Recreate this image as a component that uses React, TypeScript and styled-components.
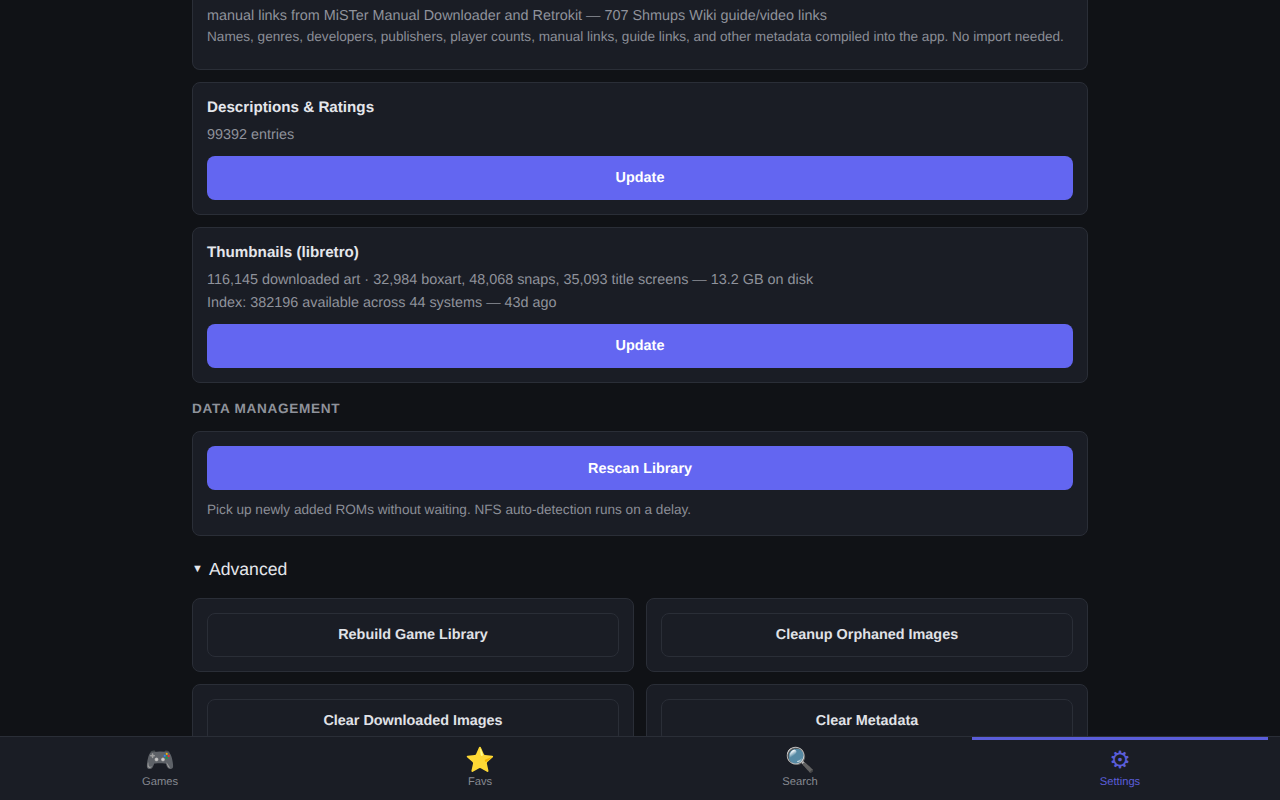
import React from 'react'
import styled, { createGlobalStyle } from 'styled-components'

const Global = createGlobalStyle`
  html, body { margin: 0; padding: 0; height: 100%; background: #101216; }
  body {
    font-family: "Liberation Sans", Arial, sans-serif;
    color: #e4e6eb;
    text-rendering: geometricPrecision;
  }
  * { box-sizing: border-box; }
`

const Shell = styled.div`
  height: 100vh;
  display: flex;
  flex-direction: column;
  overflow: hidden;
`

const Main = styled.main`
  flex: 1;
  min-height: 0;
  overflow: hidden;
  width: 896px;
  margin: 0 auto;
  display: flex;
  flex-direction: column;
`

const Card = styled.section<{ $clipped?: boolean }>`
  flex: none;
  background: #1a1d25;
  border: 1px solid #2a2e37;
  border-radius: 8px;
  padding: 14px;
  margin-bottom: 12px;
  ${p => p.$clipped && `
    border-top: none;
    border-radius: 0 0 8px 8px;
    padding-top: 5px;
    padding-bottom: 22px;
  `}
`

const ScanCard = styled(Card)`
  padding-bottom: 15px;
`

const CardTitle = styled.h3`
  margin: 0 0 5px;
  font-size: 15.2px;
  line-height: 22px;
  font-weight: 700;
  color: #e4e6eb;
`

const Stat = styled.div`
  font-size: 14.4px;
  line-height: 23px;
  color: #8f929b;
`

const Hint = styled.div<{ $gap?: number }>`
  margin-top: ${p => p.$gap ?? 0}px;
  font-size: 13.6px;
  line-height: 21px;
  color: #8b8e97;
`

const PrimaryButton = styled.button<{ $gap?: number }>`
  display: block;
  width: 100%;
  height: 44px;
  margin-top: ${p => p.$gap ?? 0}px;
  border: none;
  border-radius: 8px;
  background: #6366f1;
  color: #fff;
  font: 700 14.4px "Liberation Sans", Arial, sans-serif;
  text-rendering: geometricPrecision;
`

const RescanButton = styled(PrimaryButton)`
  padding-top: 2px;
`

const SectionLabel = styled.h2`
  margin: 5px 0 13px;
  font-size: 13.6px;
  line-height: 18px;
  font-weight: 700;
  letter-spacing: 0.68px;
  text-transform: uppercase;
  color: #8f929b;
`

const Disclosure = styled.div`
  display: flex;
  align-items: center;
  gap: 6px;
  margin: 9px 0 17px;
  font-size: 17.6px;
  line-height: 24px;
  color: #e4e6eb;
`

const Caret = styled.span`
  width: 11px;
  font-size: 11px;
  text-align: center;
  color: #e4e6eb;
`

const ActionGrid = styled.div`
  display: grid;
  grid-template-columns: 1fr 1fr;
  gap: 12px;
`

const ActionCard = styled(Card)`
  margin-bottom: 0;
`

const GhostButton = styled.button`
  display: block;
  width: 100%;
  height: 44px;
  border: 1px solid #2a2e37;
  border-radius: 8px;
  background: #1a1d25;
  color: #e0e2e7;
  font: 700 14.4px "Liberation Sans", Arial, sans-serif;
  text-rendering: geometricPrecision;
`

const Nav = styled.nav`
  flex: none;
  height: 64px;
  display: grid;
  grid-template-columns: repeat(4, 1fr);
  background: #1a1d25;
  border-top: 1px solid #2a2e37;
`

const NavItem = styled.div<{ $active?: boolean }>`
  position: relative;
  display: flex;
  flex-direction: column;
  align-items: center;
  padding-top: 9px;
  color: ${p => (p.$active ? '#5a5dd9' : '#868991')};
  ${p => p.$active && `
    &::before {
      content: "";
      position: absolute;
      top: 0;
      left: 12px;
      right: 12px;
      height: 3px;
      background: #5a5dd9;
    }
  `}
`

const NavIcon = styled.span<{ $glyph?: boolean }>`
  font-size: 24px;
  line-height: 28px;
  font-family: ${p => (p.$glyph ? '"DejaVu Sans", sans-serif' : '"Noto Color Emoji", "DejaVu Sans", sans-serif')};
`

const NavLabel = styled.span`
  margin-top: 2px;
  font-size: 11.2px;
  line-height: 13px;
`

const navItems = [
  { icon: '🎮', label: 'Games' },
  { icon: '⭐', label: 'Favs' },
  { icon: '🔍', label: 'Search' },
  { icon: '\u2699\uFE0E', label: 'Settings', active: true },
]

export default function App() {
  return (
    <Shell>
      <Global />
      <Main>
        <Card $clipped>
          <Stat>manual links from MiSTer Manual Downloader and Retrokit — 707 Shmups Wiki guide/video links</Stat>
          <Hint $gap={-2}>Names, genres, developers, publishers, player counts, manual links, guide links, and other metadata compiled into the app. No import needed.</Hint>
        </Card>
        <Card>
          <CardTitle>Descriptions &amp; Ratings</CardTitle>
          <Stat>99392 entries</Stat>
          <PrimaryButton $gap={9}>Update</PrimaryButton>
        </Card>
        <Card>
          <CardTitle>Thumbnails (libretro)</CardTitle>
          <Stat>116,145 downloaded art · 32,984 boxart, 48,068 snaps, 35,093 title screens — 13.2 GB on disk</Stat>
          <Stat>Index: 382196 available across 44 systems — 43d ago</Stat>
          <PrimaryButton $gap={9}>Update</PrimaryButton>
        </Card>
        <SectionLabel>Data Management</SectionLabel>
        <ScanCard>
          <RescanButton>Rescan Library</RescanButton>
          <Hint $gap={9}>Pick up newly added ROMs without waiting. NFS auto-detection runs on a delay.</Hint>
        </ScanCard>
        <Disclosure><Caret>▼</Caret>Advanced</Disclosure>
        <ActionGrid>
          <ActionCard><GhostButton>Rebuild Game Library</GhostButton></ActionCard>
          <ActionCard><GhostButton>Cleanup Orphaned Images</GhostButton></ActionCard>
          <ActionCard><GhostButton>Clear Downloaded Images</GhostButton></ActionCard>
          <ActionCard><GhostButton>Clear Metadata</GhostButton></ActionCard>
        </ActionGrid>
      </Main>
      <Nav>
        {navItems.map(item => (
          <NavItem key={item.label} $active={item.active}>
            <NavIcon $glyph={item.active}>{item.icon}</NavIcon>
            <NavLabel>{item.label}</NavLabel>
          </NavItem>
        ))}
      </Nav>
    </Shell>
  )
}
